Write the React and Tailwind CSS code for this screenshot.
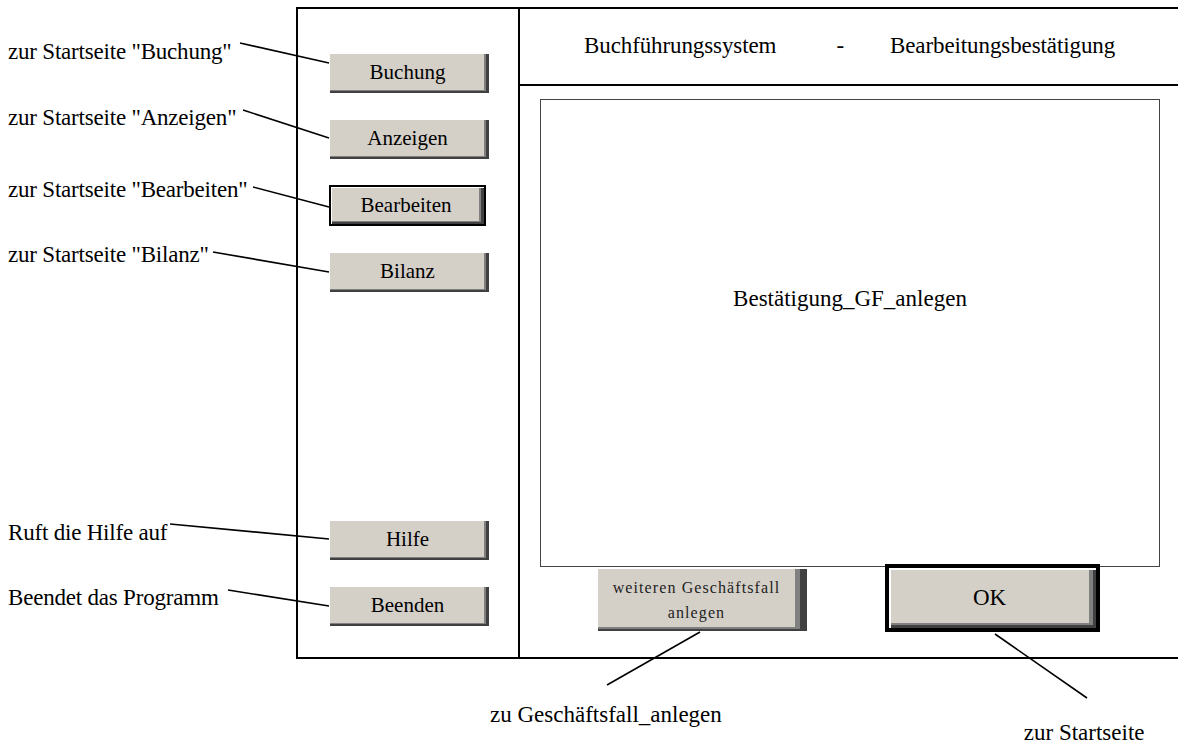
import React from "react";

const serif = "font-['Liberation_Serif','Times_New_Roman',serif]";

function SideBtn({ children, selected }) {
  if (selected) {
    return (
      <div className="w-[157px] h-[41px] border-2 border-black bg-[#d4d0c8] shadow-[inset_1px_1px_0_#ffffff,inset_-3px_-2px_0_#404040,inset_-5px_-3px_0_#808080] flex items-center justify-center pr-[3px] text-[21px] text-black">
        {children}
      </div>
    );
  }
  return (
    <div className="w-[160px] h-[40px] bg-[#d4d0c8] shadow-[inset_1px_1px_0_#ffffff,inset_-3px_-2px_0_#404040,inset_-5px_-3px_0_#808080] flex items-center justify-center pr-[3px] text-[21px] text-black">
      {children}
    </div>
  );
}

function Label({ children, top }) {
  return (
    <div className={`text-[23px] leading-[26px] tracking-[-0.2px] text-black whitespace-nowrap pl-[8px] ${top}`}>{children}</div>
  );
}

export default function App() {
  return (
    <div className={`relative w-[1178px] h-[745px] bg-white overflow-hidden ${serif}`}>
      <div className="flex pt-[7px]">
        {/* annotation column */}
        <div className="w-[296px] flex flex-col">
          <Label top="mt-[32px]">zur Startseite "Buchung"</Label>
          <Label top="mt-[40px]">zur Startseite "Anzeigen"</Label>
          <Label top="mt-[46px]">zur Startseite "Bearbeiten"</Label>
          <Label top="mt-[39px]">zur Startseite "Bilanz"</Label>
          <Label top="mt-[252px]">Ruft die Hilfe auf</Label>
          <Label top="mt-[39px]">Beendet das Programm</Label>
        </div>

        {/* frame */}
        <div className="w-[882px] h-[652px] border-t-2 border-l-2 border-b-2 border-black flex">
          {/* sidebar */}
          <div className="w-[222px] border-r-2 border-black flex flex-col pl-[31px] pt-[44px] pb-[31px]">
            <div className="flex flex-col gap-[26px]">
              <SideBtn>Buchung</SideBtn>
              <SideBtn>Anzeigen</SideBtn>
              <SideBtn selected>Bearbeiten</SideBtn>
              <SideBtn>Bilanz</SideBtn>
            </div>
            <div className="mt-auto flex flex-col gap-[26px]">
              <SideBtn>Hilfe</SideBtn>
              <SideBtn>Beenden</SideBtn>
            </div>
          </div>

          {/* main */}
          <div className="flex-1 flex flex-col">
            <div className="h-[77px] border-b-2 border-black flex items-center pl-[64px] text-[23px] tracking-[-0.1px] text-black whitespace-nowrap">
              <span>Buchführungssystem</span>
              <span className="ml-[60px]">-</span>
              <span className="ml-[46px]">Bearbeitungsbestätigung</span>
            </div>
            <div className="flex flex-col pl-[20px] pr-[18px] pt-[13px]">
              <div className="h-[468px] border border-[#444444] flex flex-col items-center pt-[186px]">
                <span className="text-[23px] leading-[26px] text-black">Bestätigung_GF_anlegen</span>
              </div>
              <div className="flex items-start">
                <div className="ml-[58px] mt-[2px] w-[209px] h-[62px] bg-[#d4d0c8] shadow-[inset_-7px_-2px_0_#404040,inset_-12px_-4px_0_#808080] flex flex-col items-center justify-center pr-[12px] text-[16px] leading-[25px] tracking-[1.1px] text-[#222222]">
                  <span>weiteren Geschäftsfall</span>
                  <span>anlegen</span>
                </div>
                <div className="ml-[78px] mt-[-3px] w-[215px] h-[68px] border-[4px] border-black bg-[#d4d0c8] shadow-[inset_2px_2px_0_#ffffff,inset_-3px_-3px_0_#404040,inset_-7px_-5px_0_#808080] flex items-center justify-center pr-[6px] text-[23px] text-black">
                  OK
                </div>
              </div>
            </div>
          </div>
        </div>
      </div>

      {/* bottom annotations */}
      <div className="flex pt-[43px]">
        <div className="ml-[490px] text-[23px] leading-[26px] text-black whitespace-nowrap">zu Geschäftsfall_anlegen</div>
        <div className="ml-[302px] mt-[18px] text-[23px] leading-[26px] text-black whitespace-nowrap">zur Startseite</div>
      </div>

      {/* leader lines */}
      <svg className="absolute inset-0 pointer-events-none" width="1178" height="745" viewBox="0 0 1178 745">
        <g stroke="#000" strokeWidth="1.6" fill="none">
          <line x1="240" y1="43" x2="329" y2="63" />
          <line x1="243" y1="110" x2="329" y2="138" />
          <line x1="253" y1="187" x2="329" y2="207" />
          <line x1="213" y1="252" x2="329" y2="272" />
          <line x1="170" y1="524" x2="329" y2="539" />
          <line x1="228" y1="590" x2="329" y2="606" />
          <line x1="700" y1="632" x2="607" y2="685" />
          <line x1="995" y1="634" x2="1087" y2="698" />
        </g>
      </svg>
    </div>
  );
}
